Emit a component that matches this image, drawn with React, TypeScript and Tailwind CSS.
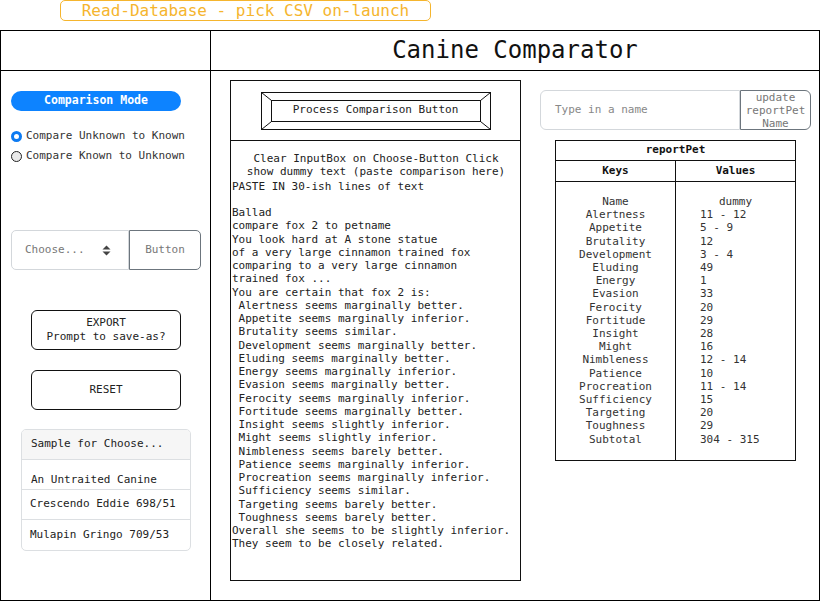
const MONO = "font-['DejaVu_Sans_Mono','Liberation_Mono',monospace]";

const COMPARISON_LINES = [
  "Ballad",
  "compare fox 2 to petname",
  "You look hard at A stone statue",
  "of a very large cinnamon trained fox",
  "comparing to a very large cinnamon",
  "trained fox ...",
  "You are certain that fox 2 is:",
  " Alertness seems marginally better.",
  " Appetite seems marginally inferior.",
  " Brutality seems similar.",
  " Development seems marginally better.",
  " Eluding seems marginally better.",
  " Energy seems marginally inferior.",
  " Evasion seems marginally better.",
  " Ferocity seems marginally inferior.",
  " Fortitude seems marginally better.",
  " Insight seems slightly inferior.",
  " Might seems slightly inferior.",
  " Nimbleness seems barely better.",
  " Patience seems marginally inferior.",
  " Procreation seems marginally inferior.",
  " Sufficiency seems similar.",
  " Targeting seems barely better.",
  " Toughness seems barely better.",
  "Overall she seems to be slightly inferior.",
  "They seem to be closely related.",
];

const REPORT_ROWS: [string, string][] = [
  ["Alertness", "11 - 12"],
  ["Appetite", "5 - 9"],
  ["Brutality", "12"],
  ["Development", "3 - 4"],
  ["Eluding", "49"],
  ["Energy", "1"],
  ["Evasion", "33"],
  ["Ferocity", "20"],
  ["Fortitude", "29"],
  ["Insight", "28"],
  ["Might", "16"],
  ["Nimbleness", "12 - 14"],
  ["Patience", "10"],
  ["Procreation", "11 - 14"],
  ["Sufficiency", "15"],
  ["Targeting", "20"],
  ["Toughness", "29"],
  ["Subtotal", "304 - 315"],
];

const SAMPLES = ["Crescendo Eddie 698/51", "Mulapin Gringo 709/53"];

function BevelButton() {
  return (
    <div className="relative w-[230px] h-[38px] flex items-center justify-center text-[11px] text-[#222]">
      <svg className="absolute inset-0" width="230" height="38" viewBox="0 0 230 38">
        <g fill="none" stroke="#111" strokeWidth="1">
          <rect x="0.5" y="0.5" width="229" height="37" />
          <rect x="10.5" y="8.5" width="209" height="21" />
          <line x1="0.5" y1="0.5" x2="10.5" y2="8.5" />
          <line x1="229.5" y1="0.5" x2="219.5" y2="8.5" />
          <line x1="0.5" y1="37.5" x2="10.5" y2="29.5" />
          <line x1="229.5" y1="37.5" x2="219.5" y2="29.5" />
        </g>
      </svg>
      <span className="relative">Process Comparison Button</span>
    </div>
  );
}

// bootstrap-style select caret: two small filled triangles
function SelectCaret() {
  return (
    <svg width="9" height="11" viewBox="0 0 9 11">
      <path d="M4.5 0.5 L8.5 4.5 L0.5 4.5 Z" fill="#444" />
      <path d="M4.5 10.5 L8.5 6.5 L0.5 6.5 Z" fill="#444" />
    </svg>
  );
}

function Radio({ checked, label }: { checked?: boolean; label: string }) {
  return (
    <div className="flex items-center gap-[4px] h-[20px]">
      {checked ? (
        <span className="w-[11px] h-[11px] rounded-full border-[3px] border-[#0d7bf2] bg-white" />
      ) : (
        <span className="w-[11px] h-[11px] rounded-full border border-[#222] bg-[#e9e9e9]" />
      )}
      <span className="text-[11px] text-[#333]">{label}</span>
    </div>
  );
}

export default function App() {
  return (
    <div className={`w-[821px] h-[601px] bg-white overflow-hidden ${MONO}`}>
      {/* Top note */}
      <div className="ml-[60px] w-[371px] h-[21px] border border-[#f5b52e] rounded-[5px] flex items-center justify-center text-[16px] text-[#f5b52e]">
        Read-Database - pick CSV on-launch
      </div>

      {/* Main frame */}
      <div className="mt-[9px] w-[820px] h-[571px] border-[1.5px] border-black grid grid-cols-[210px_1fr] grid-rows-[40px_1fr]">
        <div className="border-r-[1.5px] border-b-[1.5px] border-black" />
        <div className="border-b-[1.5px] border-black flex items-center justify-center pb-[2px] text-[24px] font-medium text-[#111]">
          Canine Comparator
        </div>

        {/* Left column */}
        <div className="border-r-[1.5px] border-black flex flex-col">
          <div className="mt-[20px] ml-[10px] w-[170px] h-[20px] rounded-full bg-[#0d83ff] flex items-center justify-center text-[11.5px] font-bold text-white">
            Comparison Mode
          </div>
          <div className="mt-[15px] ml-[10px] flex flex-col">
            <Radio checked label="Compare Unknown to Known" />
            <Radio label="Compare Known to Unknown" />
          </div>

          <div className="mt-[64px] ml-[10px] w-[190px] h-[40px] flex text-[11px] text-[#777]">
            <div className="flex-1 border border-[#d3d7db] rounded-l-[5px] flex items-center justify-between pl-[13px] pr-[17px]">
              <span>Choose...</span>
              <SelectCaret />
            </div>
            <div className="w-[72px] border border-[#6c757d] rounded-r-[5px] flex items-center justify-center">
              Button
            </div>
          </div>

          <div className="mt-[40px] ml-[30px] w-[150px] h-[40px] border border-[#111] rounded-[6px] flex flex-col items-center justify-center text-[11px] leading-[14px] text-[#222]">
            <span>EXPORT</span>
            <span>Prompt to save-as?</span>
          </div>
          <div className="mt-[20px] ml-[30px] w-[150px] h-[40px] border border-[#111] rounded-[6px] flex items-center justify-center text-[11px] text-[#222]">
            RESET
          </div>

          <div className="mt-[19px] ml-[20px] w-[170px] border border-[#dcdfe2] rounded-[5px] overflow-hidden text-[11px] text-[#222]">
            <div className="h-[30px] bg-[#f6f6f6] border-b border-[#dcdfe2] flex items-center px-[9px]">
              Sample for Choose...
            </div>
            <div className="h-[30px] border-b border-[#dcdfe2] flex items-end pb-[1px] px-[9px]">
              An Untraited Canine
            </div>
            {SAMPLES.map((s, i) => (
              <div
                key={s}
                className={`h-[30px] flex items-center px-[8px] ${i < SAMPLES.length - 1 ? "border-b border-[#dcdfe2]" : ""}`}
              >
                {s}
              </div>
            ))}
          </div>
        </div>

        {/* Right area */}
        <div className="flex pl-[19px] pt-[9px]">
          {/* Comparison box */}
          <div className="w-[291px] h-[501px] border border-[#111] flex flex-col">
            <div className="h-[60px] border-b border-[#111] flex items-center justify-center">
              <BevelButton />
            </div>
            <div className="pt-[11px] pl-[1px] text-[11px] leading-[13.25px] text-[#222]">
              <div className="text-center">Clear InputBox on Choose-Button Click</div>
              <div className="text-center">show dummy text (paste comparison here)</div>
              <div className="mt-[1px]">PASTE IN 30-ish lines of text</div>
              <div className="whitespace-pre">{"\n" + COMPARISON_LINES.join("\n")}</div>
            </div>
          </div>

          {/* Report side */}
          <div className="ml-[19px] flex flex-col">
            <div className="mt-[10px] w-[271px] h-[40px] flex text-[11px] text-[#888]">
              <div className="flex-1 border border-[#d3d7db] rounded-l-[6px] flex items-center pl-[14px]">
                Type in a name
              </div>
              <div className="w-[71px] border border-[#6c757d] rounded-r-[6px] flex flex-col items-center justify-center leading-[13px] text-[#777]">
                <span>update</span>
                <span>reportPet</span>
                <span>Name</span>
              </div>
            </div>

            <div className="mt-[10px] ml-[15px] w-[241px] h-[321px] border border-[#111] flex flex-col text-[11px] text-[#333]">
              <div className="h-[20px] border-b border-[#111] flex items-center justify-center font-bold text-[#111]">
                reportPet
              </div>
              <div className="h-[21px] border-b border-[#111] grid grid-cols-[120px_1fr] font-bold text-[#111]">
                <div className="border-r border-[#111] flex items-center justify-center">Keys</div>
                <div className="flex items-center justify-center">Values</div>
              </div>
              <div className="flex-1 grid grid-cols-[120px_1fr] leading-[13.2px]">
                <div className="border-r border-[#111] pt-[13px] flex flex-col items-center">
                  <span>Name</span>
                  {REPORT_ROWS.map(([k]) => (
                    <span key={k}>{k}</span>
                  ))}
                </div>
                <div className="pt-[13px] flex flex-col">
                  <span className="text-center">dummy</span>
                  {REPORT_ROWS.map(([k, v]) => (
                    <span key={k} className="pl-[24px]">
                      {v}
                    </span>
                  ))}
                </div>
              </div>
            </div>
          </div>
        </div>
      </div>
    </div>
  );
}
